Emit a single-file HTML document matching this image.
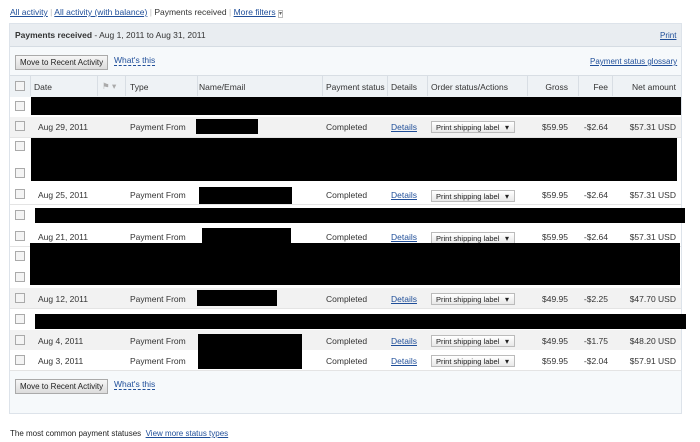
<!DOCTYPE html>
<html><head><style>
body{margin:0;width:700px;height:442px;background:#fff;font-family:"Liberation Sans",Arial,sans-serif;font-size:8.5px;color:#333;position:relative;overflow:hidden}
.a{position:absolute;white-space:nowrap}
a,.lk{color:#1f4e99;text-decoration:underline}
.bk{position:absolute;background:#000}
.cb{position:absolute;width:8px;height:8px;border:1px solid #aaa;background:#f4f4f4;left:15px}
.row{position:absolute;left:10px;width:671px;height:20px;border-bottom:1px solid #e4e4e4}
.btn{position:absolute;border:1px solid #aaa;background:linear-gradient(#f6f6f6,#dcdcdc);font-size:8px;padding:2px 4px;color:#222}
.sel{position:absolute;left:431px;width:84px;height:12px;border:1px solid #bbb;background:linear-gradient(#fff,#e8e8e8);font-size:7.5px;line-height:12px;padding-left:4px;box-sizing:border-box;color:#222}
.sel:after{content:"▾";position:absolute;right:5px;top:0;font-size:8px}
.r{text-align:right}
</style></head><body>
<div class="a" style="left:10px;top:7px;font-size:8.5px"><span class="lk">All activity</span> <span style="color:#bbb">|</span> <span class="lk">All activity (with balance)</span> <span style="color:#bbb">|</span> Payments received <span style="color:#bbb">|</span> <span class="lk">More filters</span> <span style="border:1px solid #bbb;font-size:6px;color:#666">▾</span></div>
<div class="a" style="left:9px;top:23px;width:671px;height:389px;border:1px solid #dde3ea;background:#f6f9fb"></div>
<div class="a" style="left:10px;top:24px;width:671px;height:22px;background:#e9edf1;border-bottom:1px solid #d5dce3"></div>
<div class="a" style="left:15px;top:30px;font-size:8.5px"><b>Payments received</b> - Aug 1, 2011 to Aug 31, 2011</div>
<div class="a lk" style="left:660px;top:31px;font-size:8px">Print</div>
<div class="btn" style="left:15px;top:55px">Move to Recent Activity</div>
<div class="a lk" style="left:114px;top:55px;text-decoration:none;border-bottom:1px dashed #1f4e99">What's this</div>
<div class="a lk" style="left:590px;top:57px;font-size:8px">Payment status glossary</div>
<div class="a" style="left:10px;top:75px;width:671px;height:21px;background:#eef2f5;border-top:1px solid #d8dee4;border-bottom:1px solid #d8dee4"></div>
<div class="cb" style="top:81px"></div>
<div class="a" style="left:34px;top:82px">Date</div>
<div class="a" style="left:102px;top:81px;color:#aaa">⚑ ▾</div>
<div class="a" style="left:130px;top:82px">Type</div>
<div class="a" style="left:199px;top:82px">Name/Email</div>
<div class="a" style="left:326px;top:82px">Payment status</div>
<div class="a" style="left:391px;top:82px">Details</div>
<div class="a" style="left:431px;top:82px">Order status/Actions</div>
<div class="a r" style="left:520px;width:48px;top:82px">Gross</div>
<div class="a r" style="left:570px;width:38px;top:82px">Fee</div>
<div class="a r" style="left:610px;width:66px;top:82px">Net amount</div>
<div class="a" style="left:30px;top:76px;width:1px;height:20px;background:#d8dee4;box-shadow:67px 0 #d8dee4,95px 0 #d8dee4,167px 0 #d8dee4,292px 0 #d8dee4,357px 0 #d8dee4,397px 0 #d8dee4,497px 0 #d8dee4,548px 0 #d8dee4,582px 0 #d8dee4"></div>
<div class="a" style="left:10px;top:97px;width:671px;height:273px;background:#fff"></div>

<div class="row" style="top:117px;background:#f2f2f2"></div>
<div class="row" style="top:184px;background:#fff"></div>
<div class="row" style="top:226px;background:#fff"></div>
<div class="row" style="top:288px;background:#f2f2f2"></div>
<div class="row" style="top:330px;background:#f2f2f2"></div>
<div class="row" style="top:350px;background:#fff"></div>

<div class="cb" style="top:101px"></div>
<div class="bk" style="left:31px;top:97px;width:650px;height:18px"></div>

<div class="cb" style="top:121px"></div>
<div class="a" style="left:38px;top:122px">Aug 29, 2011</div>
<div class="a" style="left:130px;top:122px">Payment From</div>
<div class="bk" style="left:196px;top:119px;width:62px;height:15px"></div>
<div class="a" style="left:326px;top:122px">Completed</div>
<div class="a lk" style="left:391px;top:122px">Details</div>
<div class="sel" style="top:121px">Print shipping label</div>
<div class="a r" style="left:520px;width:48px;top:122px">$59.95</div>
<div class="a r" style="left:570px;width:38px;top:122px">-$2.64</div>
<div class="a r" style="left:610px;width:66px;top:122px">$57.31 USD</div>

<div class="cb" style="top:141px"></div><div class="cb" style="top:168px"></div>
<div class="bk" style="left:31px;top:138px;width:646px;height:43px"></div>

<div class="cb" style="top:189px"></div>
<div class="a" style="left:38px;top:190px">Aug 25, 2011</div>
<div class="a" style="left:130px;top:190px">Payment From</div>
<div class="bk" style="left:199px;top:187px;width:93px;height:17px"></div>
<div class="a" style="left:326px;top:190px">Completed</div>
<div class="a lk" style="left:391px;top:190px">Details</div>
<div class="sel" style="top:190px">Print shipping label</div>
<div class="a r" style="left:520px;width:48px;top:190px">$59.95</div>
<div class="a r" style="left:570px;width:38px;top:190px">-$2.64</div>
<div class="a r" style="left:610px;width:66px;top:190px">$57.31 USD</div>

<div class="cb" style="top:210px"></div>
<div class="bk" style="left:35px;top:208px;width:650px;height:15px"></div>

<div class="cb" style="top:231px"></div>
<div class="a" style="left:38px;top:232px">Aug 21, 2011</div>
<div class="a" style="left:130px;top:232px">Payment From</div>
<div class="bk" style="left:202px;top:228px;width:89px;height:16px"></div>
<div class="a" style="left:326px;top:232px">Completed</div>
<div class="a lk" style="left:391px;top:232px">Details</div>
<div class="sel" style="top:232px">Print shipping label</div>
<div class="a r" style="left:520px;width:48px;top:232px">$59.95</div>
<div class="a r" style="left:570px;width:38px;top:232px">-$2.64</div>
<div class="a r" style="left:610px;width:66px;top:232px">$57.31 USD</div>

<div class="cb" style="top:251px"></div><div class="cb" style="top:272px"></div>
<div class="bk" style="left:30px;top:243px;width:650px;height:42px"></div>

<div class="cb" style="top:293px"></div>
<div class="a" style="left:38px;top:294px">Aug 12, 2011</div>
<div class="a" style="left:130px;top:294px">Payment From</div>
<div class="bk" style="left:197px;top:290px;width:80px;height:16px"></div>
<div class="a" style="left:326px;top:294px">Completed</div>
<div class="a lk" style="left:391px;top:294px">Details</div>
<div class="sel" style="top:293px">Print shipping label</div>
<div class="a r" style="left:520px;width:48px;top:294px">$49.95</div>
<div class="a r" style="left:570px;width:38px;top:294px">-$2.25</div>
<div class="a r" style="left:610px;width:66px;top:294px">$47.70 USD</div>

<div class="cb" style="top:314px"></div>
<div class="bk" style="left:35px;top:314px;width:651px;height:15px"></div>

<div class="cb" style="top:335px"></div>
<div class="a" style="left:38px;top:336px">Aug 4, 2011</div>
<div class="a" style="left:130px;top:336px">Payment From</div>
<div class="a" style="left:326px;top:336px">Completed</div>
<div class="a lk" style="left:391px;top:336px">Details</div>
<div class="sel" style="top:335px">Print shipping label</div>
<div class="a r" style="left:520px;width:48px;top:336px">$49.95</div>
<div class="a r" style="left:570px;width:38px;top:336px">-$1.75</div>
<div class="a r" style="left:610px;width:66px;top:336px">$48.20 USD</div>

<div class="cb" style="top:355px"></div>
<div class="a" style="left:38px;top:356px">Aug 3, 2011</div>
<div class="a" style="left:130px;top:356px">Payment From</div>
<div class="a" style="left:326px;top:356px">Completed</div>
<div class="a lk" style="left:391px;top:356px">Details</div>
<div class="sel" style="top:355px">Print shipping label</div>
<div class="a r" style="left:520px;width:48px;top:356px">$59.95</div>
<div class="a r" style="left:570px;width:38px;top:356px">-$2.04</div>
<div class="a r" style="left:610px;width:66px;top:356px">$57.91 USD</div>
<div class="bk" style="left:198px;top:334px;width:104px;height:35px"></div>

<div class="btn" style="left:15px;top:379px">Move to Recent Activity</div>
<div class="a lk" style="left:114px;top:379px;text-decoration:none;border-bottom:1px dashed #1f4e99">What's this</div>

<div class="a" style="left:10px;top:429px;font-size:8px;color:#222">The most common payment statuses &nbsp;<span class="lk">View more status types</span></div>
</body></html>
